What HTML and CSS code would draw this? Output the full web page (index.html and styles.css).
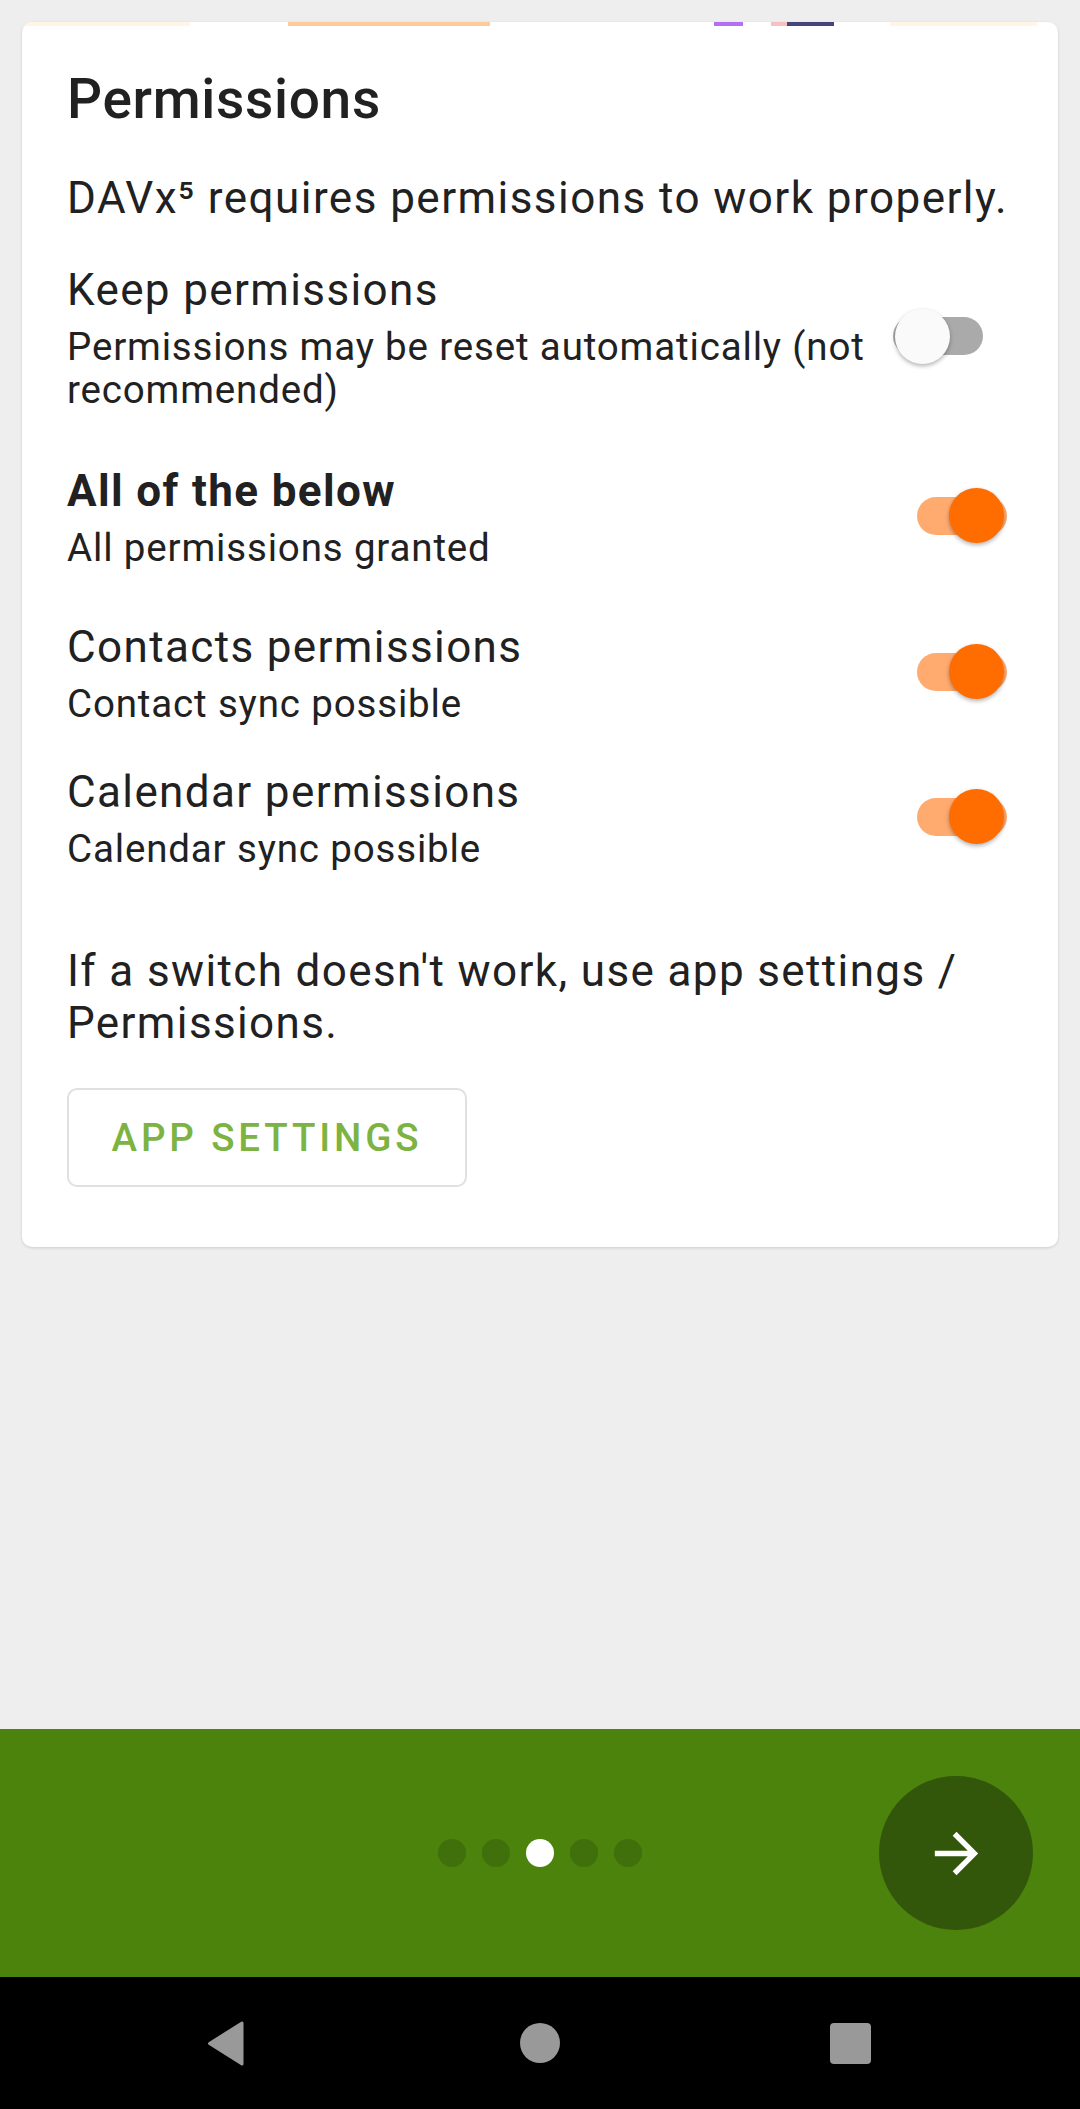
FILE: index.html
```html
<!DOCTYPE html>
<html lang="en">
<head>
    <meta charset="UTF-8">
    <meta name="viewport" content="width=device-width, initial-scale=1.0">
    <title>Permissions</title>
    <link rel="stylesheet" href="styles.css">
</head>
<body>
    <div class="screen">
        <div class="content">
            <div class="card">
                <!-- bottom edge of the intro illustration -->
                <div class="card-image">
                    <span class="seg seg-1"></span>
                    <span class="seg seg-2"></span>
                    <span class="seg seg-3"></span>
                    <span class="seg seg-4"></span>
                    <span class="seg seg-5"></span>
                    <span class="seg seg-6"></span>
                </div>

                <div class="card-body">
                    <h1>Permissions</h1>
                    <p class="intro">DAVx⁵ requires permissions to work properly.</p>

                    <div class="perm-row keep">
                        <div class="perm-text">
                            <div class="perm-title">Keep permissions</div>
                            <div class="perm-summary">Permissions may be reset automatically (not recommended)</div>
                        </div>
                        <span class="switch">
                            <span class="track"></span>
                            <span class="thumb"></span>
                        </span>
                    </div>

                    <div class="perm-row all">
                        <div class="perm-text">
                            <div class="perm-title bold">All of the below</div>
                            <div class="perm-summary">All permissions granted</div>
                        </div>
                        <span class="switch on">
                            <span class="track"></span>
                            <span class="thumb"></span>
                        </span>
                    </div>

                    <div class="perm-row contacts">
                        <div class="perm-text">
                            <div class="perm-title">Contacts permissions</div>
                            <div class="perm-summary">Contact sync possible</div>
                        </div>
                        <span class="switch on">
                            <span class="track"></span>
                            <span class="thumb"></span>
                        </span>
                    </div>

                    <div class="perm-row calendar">
                        <div class="perm-text">
                            <div class="perm-title">Calendar permissions</div>
                            <div class="perm-summary">Calendar sync possible</div>
                        </div>
                        <span class="switch on">
                            <span class="track"></span>
                            <span class="thumb"></span>
                        </span>
                    </div>

                    <p class="hint">If a switch doesn't work, use app settings / Permissions.</p>

                    <a href="javascript:void(0);" class="btn-outline">App settings</a>
                </div>
            </div>
        </div>

        <div class="pager">
            <div></div>
            <div class="dots">
                <span class="dot"></span>
                <span class="dot"></span>
                <span class="dot active"></span>
                <span class="dot"></span>
                <span class="dot"></span>
            </div>
            <a href="javascript:void(0);" class="fab">
                <svg viewBox="0 0 24 24" width="65" height="65">
                    <path d="M12 4l-1.41 1.41L16.17 11H4v2h12.17l-5.58 5.59L12 20l8-8z" fill="#ffffff"/>
                </svg>
            </a>
        </div>

        <div class="navbar">
            <svg class="nav-back" viewBox="0 0 37 45" width="37" height="45">
                <path d="M35 2 L35 43 L2.5 22.5 Z" fill="#999999" stroke="#999999" stroke-width="3" stroke-linejoin="round"/>
            </svg>
            <span class="nav-home"></span>
            <span class="nav-recents"></span>
        </div>
    </div>
</body>
</html>
```

FILE: styles.css
```css
body {
    margin: 0;
    padding: 0;
    font-family: Roboto, "Liberation Sans", sans-serif;
    background-color: #eeeeee;
    color: #212121;
}

.screen {
    display: flex;
    flex-direction: column;
    width: 1080px;
    height: 2109px;
}

.content {
    flex: 1;
    padding: 22px 22px 0;
}

.card {
    background-color: white;
    border-radius: 10px;
    box-shadow: 0 1px 3px rgba(0, 0, 0, 0.14);
    overflow: hidden;
}

/* strip of the picture above the card text */
.card-image {
    display: flex;
    height: 4px;
}

.seg {
    display: block;
    height: 4px;
}

.seg-1 { margin-left: 3px; width: 165px; background-color: #fff5e6; }
.seg-2 { margin-left: 98px; width: 202px; background-color: #ffcc99; }
.seg-3 { margin-left: 224px; width: 29px; background-color: #b36ef2; }
.seg-4 { margin-left: 28px; width: 16px; background-color: #f8c0c0; }
.seg-5 { width: 47px; background-color: #45457a; }
.seg-6 { margin-left: 56px; width: 147px; background-color: #fff5e6; }

.card-body {
    padding: 43px 20px 60px 45px;
}

h1 {
    margin: 0;
    font-size: 55px;
    font-weight: 500;
    line-height: 61px;
    letter-spacing: 0.0125em;
}

.intro {
    margin: 44px 0 0;
    font-size: 44px;
    line-height: 49px;
    letter-spacing: 0.033em;
}

.perm-row {
    display: flex;
    align-items: center;
    gap: 8px;
    margin-right: 31px;
}

.perm-row.keep { margin-top: 43px; }
.perm-row.all { margin-top: 56px; }
.perm-row.contacts { margin-top: 54px; }
.perm-row.calendar { margin-top: 43px; }

.perm-text {
    flex: 1;
}

.perm-title {
    font-size: 44px;
    line-height: 49px;
    letter-spacing: 0.03125em;
}

.perm-title.bold {
    font-weight: 700;
}

.perm-summary {
    margin-top: 10px;
    font-size: 38.5px;
    line-height: 43px;
    letter-spacing: 0.022em;
}

/* switch: track and thumb share one grid cell */
.switch {
    display: grid;
    width: 90px;
    height: 55px;
    margin-bottom: 5px;
    flex-shrink: 0;
}

.perm-row.keep .switch {
    margin-right: 24px;
}

.track {
    grid-area: 1 / 1;
    align-self: center;
    height: 38px;
    border-radius: 19px;
    background-color: #aaaaaa;
}

.thumb {
    grid-area: 1 / 1;
    justify-self: start;
    width: 55px;
    height: 55px;
    margin-left: 2px;
    border-radius: 50%;
    background-color: #fafafa;
    box-shadow: 0 2px 4px rgba(0, 0, 0, 0.3);
}

.switch.on .track {
    background-color: #ffab70;
}

.switch.on .thumb {
    justify-self: end;
    margin-left: 0;
    margin-right: 3px;
    background-color: #ff6d00;
}

.hint {
    margin: 75px 0 0;
    font-size: 44px;
    line-height: 52px;
    letter-spacing: 0.03125em;
}

.btn-outline {
    display: flex;
    align-items: center;
    justify-content: center;
    box-sizing: border-box;
    width: 400px;
    height: 99px;
    margin-top: 39px;
    border: 2px solid #e0e0e0;
    border-radius: 10px;
    color: #7cb342;
    font-size: 38.5px;
    font-weight: 500;
    letter-spacing: 0.1em;
    text-transform: uppercase;
    text-decoration: none;
}

.pager {
    display: grid;
    grid-template-columns: 1fr auto 1fr;
    align-items: center;
    height: 248px;
    background-color: #4b830d;
}

.dots {
    display: flex;
    gap: 16px;
}

.dot {
    width: 28px;
    height: 28px;
    border-radius: 50%;
    background-color: #40700b;
}

.dot.active {
    background-color: white;
}

.fab {
    justify-self: end;
    display: flex;
    align-items: center;
    justify-content: center;
    width: 154px;
    height: 154px;
    margin-right: 47px;
    border-radius: 50%;
    background-color: #32570a;
}

.navbar {
    display: flex;
    align-items: center;
    height: 132px;
    background-color: black;
}

.nav-back {
    margin-left: 207px;
}

.nav-home {
    width: 40px;
    height: 40px;
    margin-left: 276px;
    border-radius: 50%;
    background-color: #999999;
}

.nav-recents {
    width: 41px;
    height: 41px;
    margin-left: 270px;
    border-radius: 4px;
    background-color: #999999;
}
```
